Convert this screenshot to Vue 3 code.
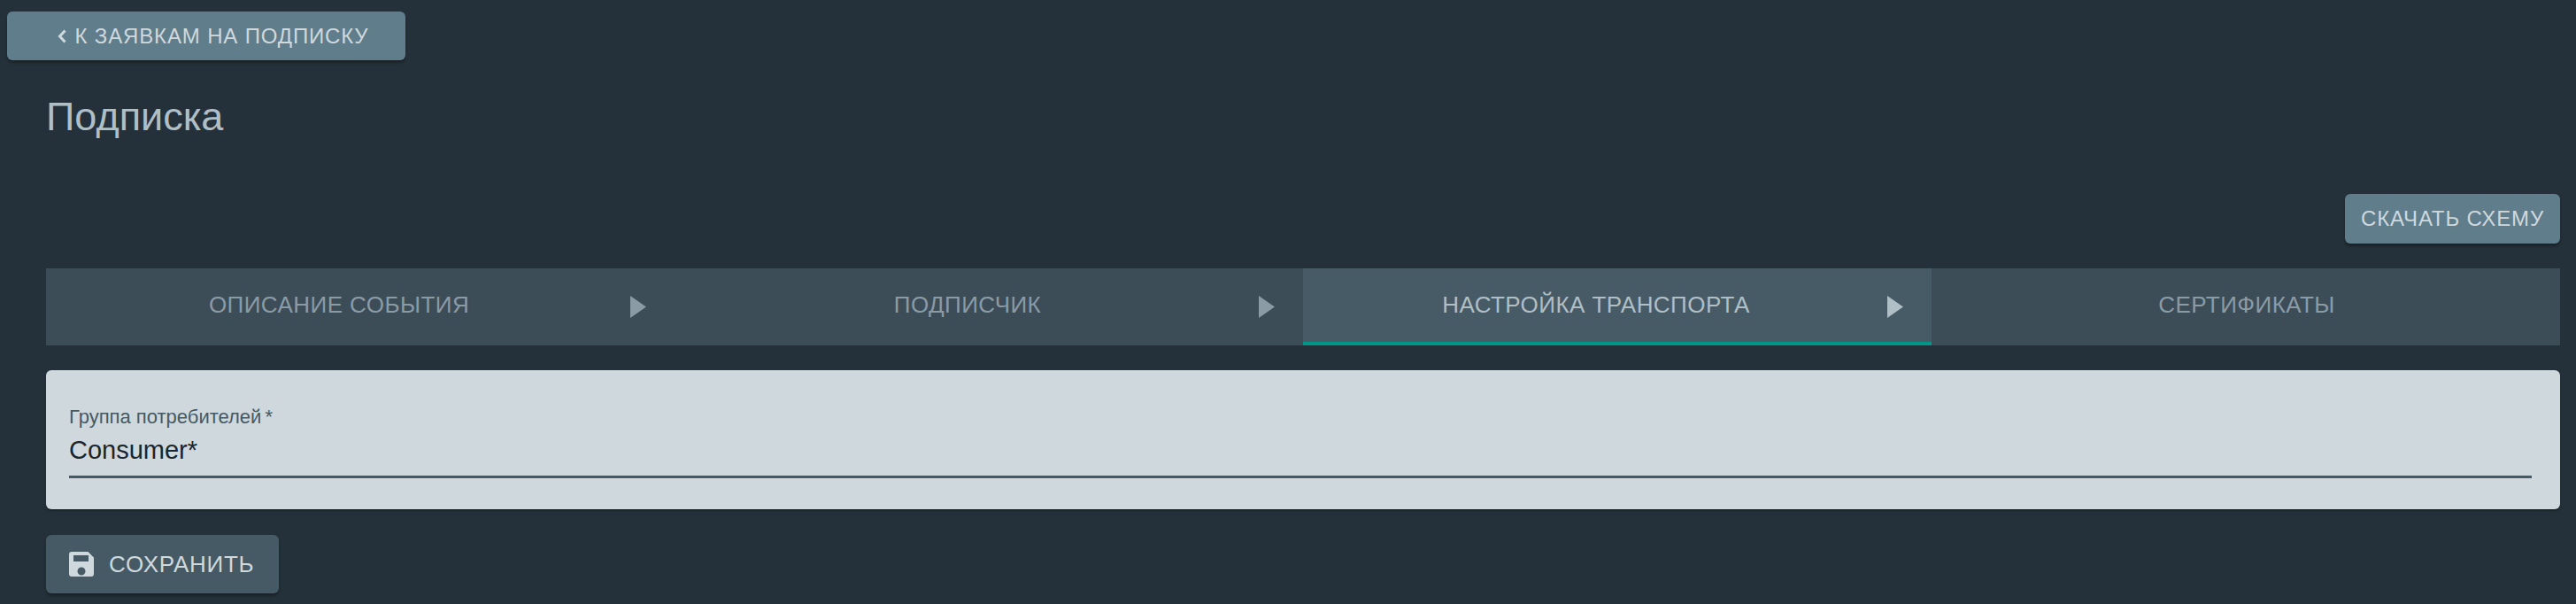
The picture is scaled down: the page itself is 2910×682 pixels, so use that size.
<template>
  <div class="page">
    <button class="btn back-btn">
      <svg class="chevron" viewBox="0 0 12 18"><path d="M9.5 2.5 3.5 9l6 6.500" fill="none" stroke="currentColor" stroke-width="3" /></svg>
      К заявкам на подписку
    </button>
    <div class="content">
      <h1 class="title">Подписка</h1>
      <div class="actions">
        <button class="btn">Скачать схему</button>
      </div>
      <div class="stepper">
        <div v-for="(step, i) in steps" :key="step" class="step" :class="{ active: i === 2 }">
          <span class="step-label">{{ step }}</span>
          <svg v-if="i < steps.length - 1" class="step-arrow" viewBox="0 0 18 26"><path d="M0 0 18 12.500 0 25z" fill="currentColor" /></svg>
        </div>
      </div>
      <div class="card">
        <label class="field-label">Группа потребителей<span class="req">*</span></label>
        <div class="field-value">Consumer*</div>
      </div>
      <button class="btn save-btn">
        <svg class="save-icon" viewBox="0 0 28 28"><path fill-rule="evenodd" d="M3 0h18.500L28 6.500V25a3 3 0 0 1-3 3H3a3 3 0 0 1-3-3V3a3 3 0 0 1 3-3zm2 4v7h17V4zm9 13.500a4.500 4.500 0 1 0 0 9 4.500 4.500 0 0 0 0-9z" fill="currentColor" /></svg>
        Сохранить
      </button>
    </div>
  </div>
</template>

<script setup>
const steps = ['Описание события', 'Подписчик', 'Настройка транспорта', 'Сертификаты'];
</script>

<style>
html, body {
  margin: 0;
  background: #25313a;
}
</style>

<style scoped>
.page {
  height: 682px;
  box-sizing: border-box;
  padding-top: 13px;
  background: #25313a;
  font-family: "Liberation Sans", Arial, sans-serif;
  overflow: hidden;
}

.btn {
  display: inline-flex;
  align-items: center;
  justify-content: center;
  border: none;
  border-radius: 6px;
  height: 56px;
  padding: 0 18px;
  background: #607d8b;
  color: #cfd8dc;
  font-family: inherit;
  font-size: 24px;
  letter-spacing: 0.85px;
  text-transform: uppercase;
  box-shadow: 0 3px 3px rgba(0, 0, 0, 0.3);
}

.back-btn {
  margin-left: 8px;
  width: 450px;
  height: 55px;
  padding-left: 32px;
  padding-right: 18px;
}

.chevron {
  width: 12px;
  height: 18px;
  margin-right: 9px;
}

.content {
  padding: 0 18px 0 52px;
}

.title {
  margin: 36px 0 0;
  font-size: 45px;
  font-weight: 400;
  line-height: 56px;
  color: #b0bec5;
}

.actions {
  display: flex;
  justify-content: flex-end;
  margin-top: 59px;
}

.stepper {
  display: flex;
  margin-top: 28px;
  height: 87px;
  background: #3c4d58;
}

.step {
  flex: 0 0 25%;
  display: flex;
  align-items: center;
  box-sizing: border-box;
  padding-right: 32px;
  color: #8a9ba6;
  font-size: 26px;
  letter-spacing: 0.45px;
  text-transform: uppercase;
}

.step:last-child {
  padding-right: 0;
}

.step.active {
  background: #475b67;
  border-bottom: 4px solid #009688;
  padding-top: 4px;
  color: #b0bec5;
}

.step-label {
  flex: 1;
  text-align: center;
  padding-bottom: 4px;
  padding-left: 2px;
}

.step-arrow {
  width: 18px;
  height: 26px;
}

.card {
  margin-top: 28px;
  height: 157px;
  box-sizing: border-box;
  padding: 41px 32px 0 26px;
  border-radius: 6px;
  background: #cfd8dc;
  box-shadow: 0 2px 2px rgba(0, 0, 0, 0.3);
}

.field-label {
  display: block;
  font-size: 22px;
  line-height: 24px;
  color: #455a64;
}

.req {
  margin-left: 4px;
}

.field-value {
  margin-top: 6px;
  height: 48px;
  line-height: 38px;
  font-size: 29px;
  color: #1b262c;
  border-bottom: 3px solid #455a64;
}

.save-btn {
  margin-top: 29px;
  width: 263px;
  height: 66px;
  justify-content: flex-start;
  padding: 0 26px;
  background: #455a64;
  font-size: 26px;
  letter-spacing: 0.7px;
}

.save-icon {
  width: 28px;
  height: 28px;
  margin-right: 17px;
}
</style>
